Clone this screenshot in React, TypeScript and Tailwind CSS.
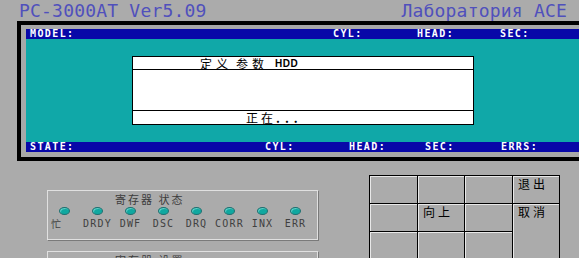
import React from "react";

const mono = { fontFamily: '"DejaVu Sans Mono", "Liberation Mono", monospace' };
const cjk = { fontFamily: '"Noto Sans CJK SC", "DejaVu Sans", sans-serif' };

const regs = ["忙", "DRDY", "DWF", "DSC", "DRQ", "CORR", "INX", "ERR"];

function Led() {
  return (
    <div className="w-[11px] h-[8px] rounded-[50%] bg-[#10a8a0] border border-[#207070] shadow-[inset_1px_1px_0_#60d0c8]" />
  );
}

function Cell({ label, tall }: { label?: string; tall?: boolean }) {
  return (
    <div
      className={`border-r border-b border-black shadow-[inset_1px_1px_0_#e8e8e8] pl-[5px] pt-[1px] text-[12px] leading-[14px] tracking-[3px] text-black ${
        tall ? "row-span-2" : ""
      }`}
      style={cjk}
    >
      {label}
    </div>
  );
}

export default function App() {
  return (
    <div className="w-[579px] h-[258px] overflow-hidden bg-[#ababab] relative">
      {/* header */}
      <div className="h-[21px] flex justify-between items-end text-[#5050bc] text-[18px] leading-[21px]" style={mono}>
        <span className="pl-[19px] tracking-[0.2px]">PC-3000AT Ver5.09</span>
        <span className="pr-[12px] tracking-[0.2px]">Лаборатория ACE</span>
      </div>

      {/* main frame */}
      <div className="ml-[17px] w-[600px] border-4 border-black bg-[#a8a8a8] pt-[4px] pl-[5px] pb-[5px]">
        <div
          className="h-[10px] bg-[#0808a8] flex items-center text-white font-bold text-[10px] leading-[10px] tracking-[1.4px]"
          style={mono}
        >
          <span className="w-[307px] pl-[4px]">MODEL:</span>
          <span className="w-[84px]">CYL:</span>
          <span className="w-[83px]">HEAD:</span>
          <span>SEC:</span>
        </div>
        <div className="h-[103px] bg-[#10a8a8] pt-[17px] pl-[106px]">
          <div className="w-[342px] h-[69px] bg-white border border-black flex flex-col">
            <div
              className="h-[13px] border-b border-black pl-[67px] text-[12px] leading-[13px] tracking-[4px] text-black flex items-center"
              style={cjk}
            >
              <span>定义</span>
              <span className="ml-[4px]">参数</span>
              <span
                className="ml-[7px] font-bold text-[10px] tracking-[0.5px]"
                style={{ fontFamily: '"Liberation Sans", Arial, sans-serif' }}
              >
                HDD
              </span>
            </div>
            <div className="flex-1 border-b border-black" />
            <div className="h-[13px] pl-[113px] text-[12px] leading-[13px] tracking-[3px] text-black flex items-center" style={cjk}>
              <span>正在</span>
              <span className="tracking-[5px] font-bold">...</span>
            </div>
          </div>
        </div>
        <div
          className="h-[10px] bg-[#0808a8] flex items-center text-white font-bold text-[10px] leading-[10px] tracking-[1.4px]"
          style={mono}
        >
          <span className="w-[239px] pl-[4px]">STATE:</span>
          <span className="w-[84px]">CYL:</span>
          <span className="w-[76px]">HEAD:</span>
          <span className="w-[76px]">SEC:</span>
          <span>ERRS:</span>
        </div>
      </div>

      {/* lower area */}
      <div className="flex">
        <div className="w-[369px] pl-[47px] pt-[29px] flex flex-col gap-[11px]">
          <div className="w-[271px] h-[50px] border border-[#e0e0e0] shadow-[1px_1px_0_#7a7a7a] flex flex-col">
            <div className="pl-[67px] h-[16px] text-[11px] leading-[16px] tracking-[2px] text-[#3c3c3c]" style={cjk}>
              寄存器 状态
            </div>
            <div className="flex">
              {regs.map((r, i) => (
                <div key={r} className="w-[33px] flex flex-col items-center">
                  <Led />
                  <span
                    className={`mt-[4px] text-[10px] leading-[10px] tracking-[1.2px] text-[#404040] ${i === 0 ? "self-start pl-[3px]" : ""}`}
                    style={i === 0 ? cjk : mono}
                  >
                    {r}
                  </span>
                </div>
              ))}
            </div>
          </div>
          <div className="w-[271px] h-[30px] border border-[#e0e0e0] shadow-[1px_1px_0_#7a7a7a]">
            <div className="pl-[67px] text-[11px] leading-[16px] tracking-[2px] text-[#3c3c3c]" style={cjk}>
              寄存器 设置
            </div>
          </div>
        </div>
        <div className="pt-[14px]">
          <div className="grid grid-cols-[48px_47px_48px_47px] grid-rows-[28px_28px_28px] border-t border-l border-black">
            <Cell />
            <Cell />
            <Cell />
            <Cell label="退出" />
            <Cell />
            <Cell label="向上" />
            <Cell />
            <Cell label="取消" tall />
            <Cell />
            <Cell />
            <Cell />
          </div>
        </div>
      </div>
    </div>
  );
}
